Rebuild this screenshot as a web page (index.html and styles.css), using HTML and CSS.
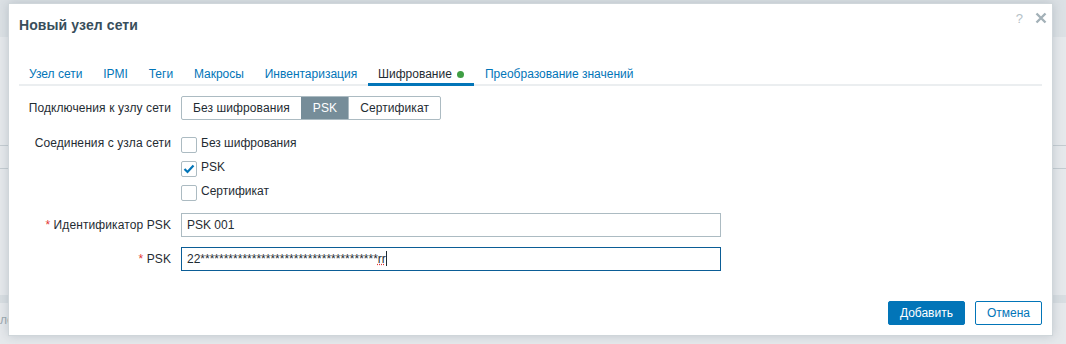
FILE: index.html
```html
<!DOCTYPE html>
<html lang="ru">

	<head>
		<meta charset="utf-8">
		<title>Новый узел сети</title>
		<meta name="viewport" content="width=device-width, initial-scale=1.0">

		<link rel="stylesheet" href="styles.css">
	</head>

	<body>

		<!-- Page behind the overlay -->
		<div class="page">
			<div class="page-header"></div>
			<div class="page-row row-1"></div>
			<div class="page-row row-2"></div>
			<div class="page-band"></div>
			<div class="page-text">лен</div>
		</div>

		<!-- Dialog -->
		<div class="overlay-dialogue">

			<div class="dialogue-header">
				<h4>Новый узел сети</h4>
				<span class="btn-help">?</span>
				<span class="btn-close">
					<svg width="12" height="12" viewBox="0 0 12 12"><path d="M1.5 1.5 L10.5 10.5 M10.5 1.5 L1.5 10.5" stroke="#a3b1b8" stroke-width="2.4"/></svg>
				</span>
			</div>

			<div class="dialogue-body">

				<ul class="tabs">
					<li><a href="#">Узел сети</a></li>
					<li><a href="#">IPMI</a></li>
					<li><a href="#">Теги</a></li>
					<li><a href="#">Макросы</a></li>
					<li><a href="#">Инвентаризация</a></li>
					<li class="active"><a href="#">Шифрование <span class="dot"></span></a></li>
					<li><a href="#">Преобразование значений</a></li>
				</ul>

				<div class="form-grid">
					<label>Подключения к узлу сети</label>
					<div>
						<ul class="radio-list">
							<li>Без шифрования</li>
							<li class="selected">PSK</li>
							<li>Сертификат</li>
						</ul>
					</div>

					<label class="label-checks">Соединения с узла сети</label>
					<ul class="checkbox-list">
						<li><span class="checkbox"></span>Без шифрования</li>
						<li><span class="checkbox checked">
							<svg width="12" height="10" viewBox="0 0 12 10"><path d="M1.5 5 L4.5 8 L10.5 1.5" fill="none" stroke="#0275b8" stroke-width="2.2"/></svg>
						</span>PSK</li>
						<li><span class="checkbox"></span>Сертификат</li>
					</ul>

					<label><span class="required">*</span> Идентификатор PSK</label>
					<div class="text-input">PSK 001</div>

					<label><span class="required">*</span> PSK</label>
					<div class="text-input focused">22**************************************<span class="spell">rr</span><span class="caret"></span></div>
				</div>

			</div>

			<div class="dialogue-footer">
				<button class="btn-primary">Добавить</button>
				<button class="btn-alt">Отмена</button>
			</div>

		</div>

	</body>
</html>
```

FILE: styles.css
```css
body {
	margin: 0;
	background: #e6e9ec;
	font-family: "Liberation Sans", Arial, sans-serif;
	font-size: 12px;
	color: #1f2c33;
	height: 344px;
	overflow: hidden;
}

/* Page behind the overlay */

.page {
	height: 344px;
}

.page-header {
	height: 37px;
	background: #dce1e5;
}

.page-row {
	height: 22px;
	border-bottom: 1px solid #c4ccd1;
}

.row-1 {
	height: 108px;
}

.page-band {
	height: 8px;
	margin-top: 126px;
	background: #d8dee2;
}

.page-text {
	padding: 10px 0 0 0;
	color: #9aa7ae;
}

/* Dialog */

.overlay-dialogue {
	position: absolute;
	left: 8px;
	top: 3px;
	width: 1043px;
	height: 331px;
	background: #fff;
	border: 1px solid #cfd6da;
	box-shadow: 0 0 10px rgba(120, 135, 145, 0.35);
	display: flex;
	flex-direction: column;
}

.dialogue-header {
	display: flex;
	align-items: center;
	padding: 11px 10px 10px;
}

.dialogue-header h4 {
	margin: 0;
	font-size: 14px;
	line-height: 20px;
	font-weight: bold;
	color: #384e5b;
	flex: 1;
	letter-spacing: 0.1px;
}

.btn-help {
	color: #b5c1c7;
	font-size: 13px;
	margin-right: 12px;
	margin-top: -14px;
}

.btn-close {
	display: flex;
	margin-top: -14px;
	margin-right: -5px;
}

.dialogue-body {
	flex: 1;
	padding: 0 10px;
}

/* Tabs */

.tabs {
	list-style: none;
	margin: 12px 0 0;
	padding: 0;
	display: flex;
	gap: 0.8px;
	border-bottom: 2px solid #ebeef0;
}

.tabs li {
	padding: 8px 10px 0;
	line-height: 18px;
	border-bottom: 3px solid transparent;
	margin-bottom: -2px;
}

.tabs a {
	color: #0275b8;
	text-decoration: none;
}

.tabs .active {
	border-bottom-color: #0275b8;
}

.tabs .active a {
	color: #1f2c33;
}

.dot {
	display: inline-block;
	width: 7px;
	height: 7px;
	border-radius: 50%;
	background: #3f9e44;
	margin-left: 2px;
	vertical-align: 0;
}

/* Form */

.form-grid {
	display: grid;
	grid-template-columns: 152px 540px;
	column-gap: 10px;
	row-gap: 10px;
	padding-top: 10px;
}

.form-grid label {
	text-align: right;
	line-height: 24px;
	white-space: nowrap;
	letter-spacing: 0.1px;
}

.form-grid .label-checks {
	padding-top: 1px;
}

.required {
	color: #e33734;
}

.radio-list {
	list-style: none;
	margin: 0;
	padding: 0;
	display: inline-flex;
	border: 1px solid #acbbc2;
	border-radius: 2px;
}

.radio-list li {
	padding: 0 11px;
	line-height: 22px;
	border-left: 1px solid #acbbc2;
	letter-spacing: 0.1px;
}

.radio-list li:first-child {
	border-left: none;
}

.radio-list .selected {
	background: #768d99;
	border-color: #768d99;
	color: #fff;
}

.checkbox-list {
	list-style: none;
	margin: 0;
	padding: 1px 0 0;
}

.checkbox-list li {
	display: flex;
	align-items: flex-start;
	height: 24px;
	line-height: 24px;
}

.checkbox {
	width: 14px;
	height: 14px;
	border: 1px solid #acbbc2;
	border-radius: 2px;
	margin: 6px 4px 0 0;
	display: flex;
	align-items: center;
	justify-content: center;
}

.text-input {
	height: 22px;
	line-height: 22px;
	border: 1px solid #acbbc2;
	padding: 0 5px;
	white-space: nowrap;
	overflow: hidden;
}

.text-input.focused {
	border-color: #0b5d96;
}

.spell {
	text-decoration: underline dotted #e33734;
}

.caret {
	display: inline-block;
	width: 1px;
	height: 15px;
	background: #1f2c33;
	vertical-align: -3px;
}

/* Footer */

.dialogue-footer {
	display: flex;
	justify-content: flex-end;
	gap: 10px;
	padding: 0 10px 10px;
}

.dialogue-footer button {
	font-family: inherit;
	font-size: 12px;
	height: 24px;
	padding: 0 11px;
	border-radius: 2px;
	border: 1px solid #0275b8;
	cursor: pointer;
}

.btn-primary {
	background: #0275b8;
	color: #fff;
}

.btn-alt {
	background: #fff;
	color: #0275b8;
}
```
